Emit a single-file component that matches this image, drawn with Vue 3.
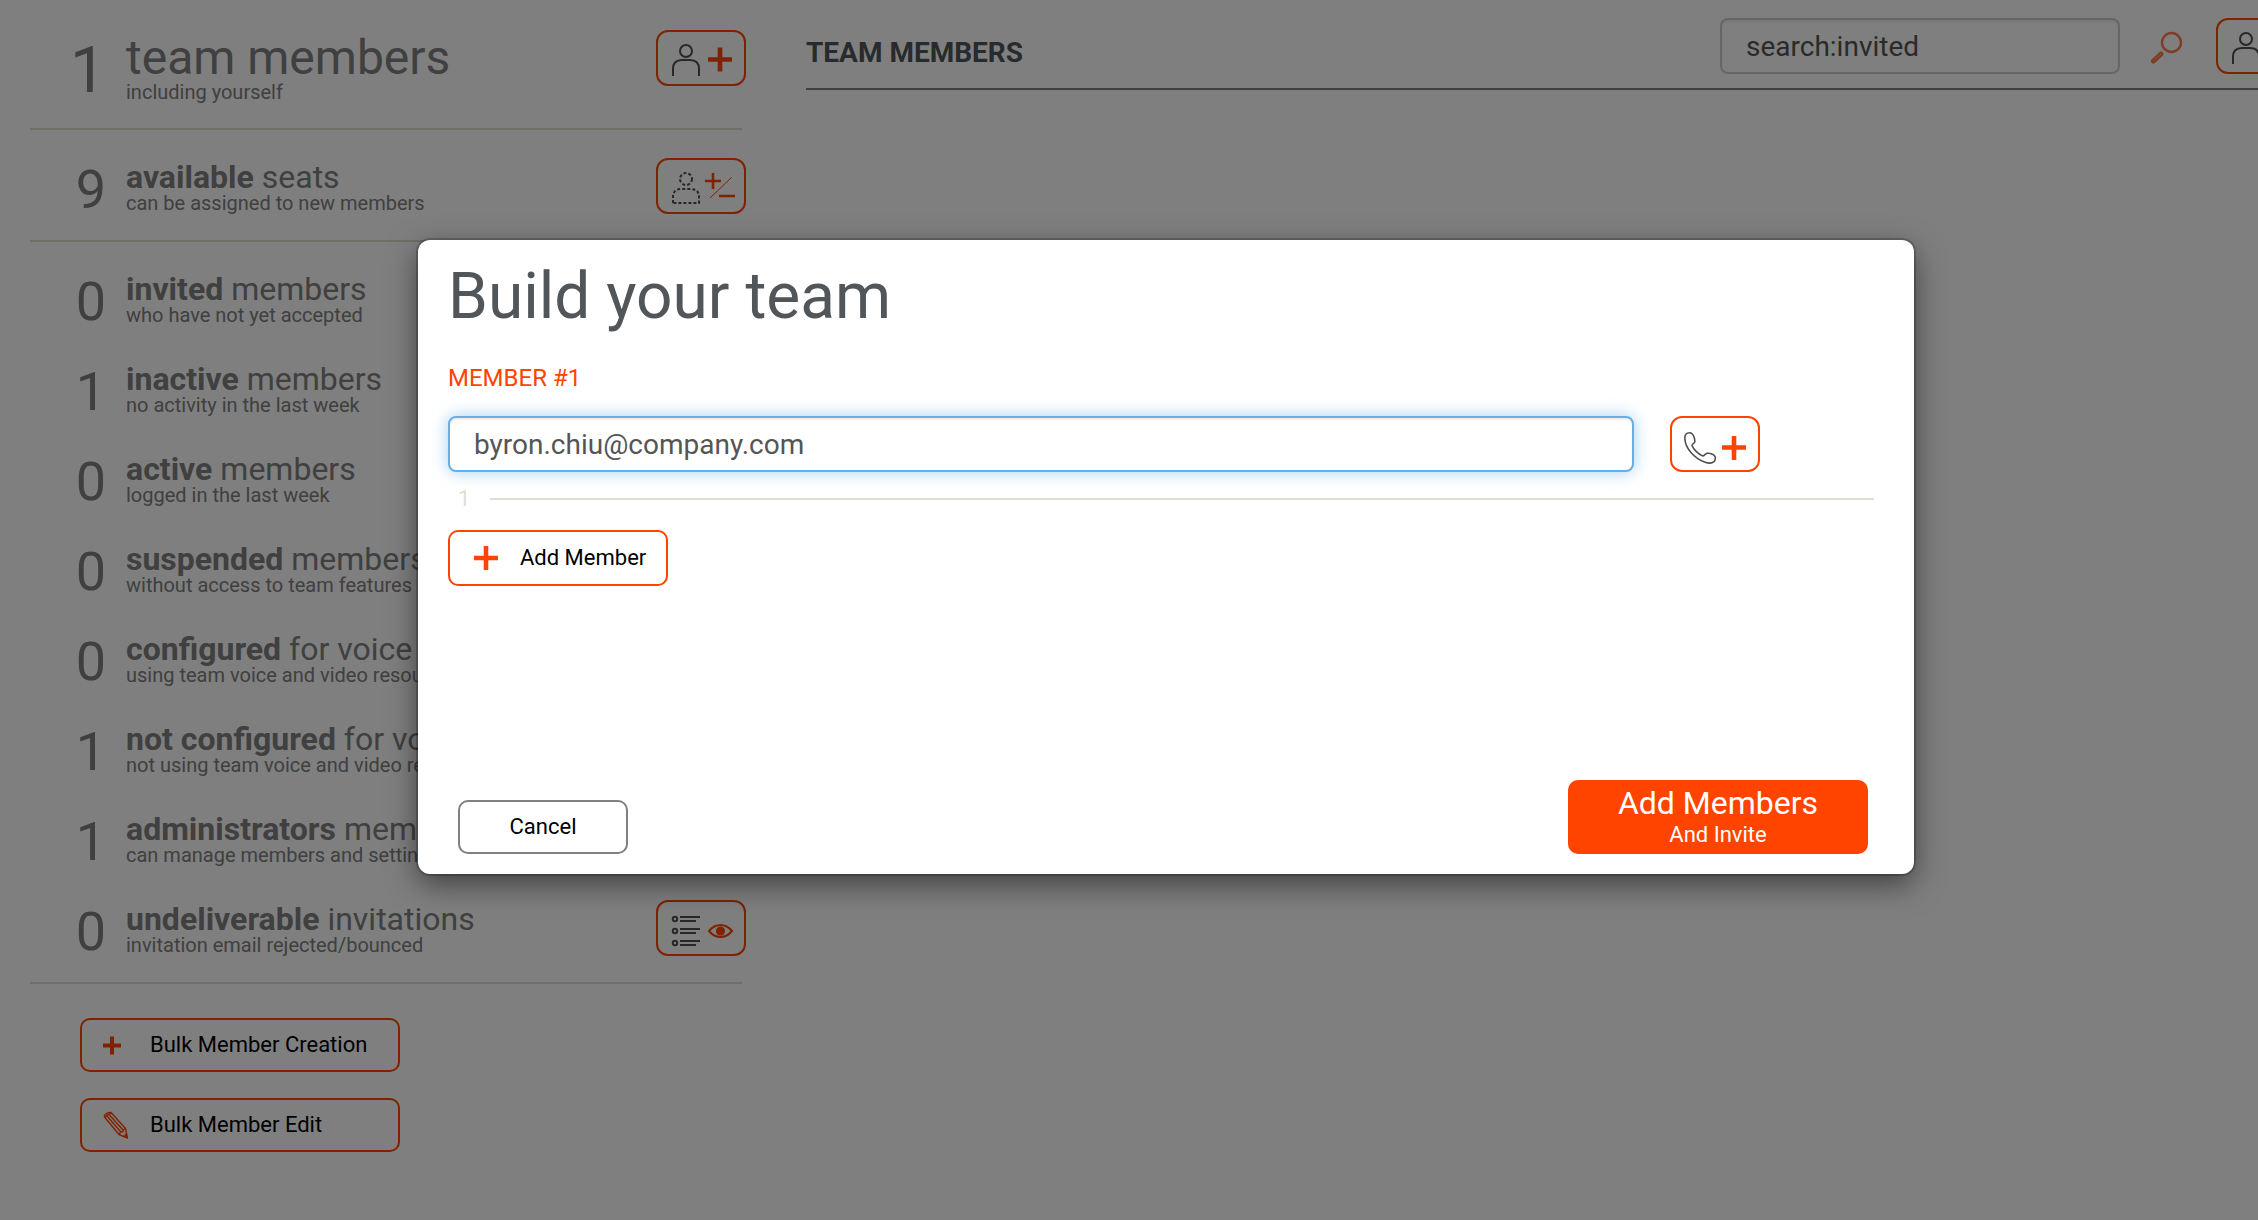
<script setup>
import { ref } from 'vue'

const search = ref('search:invited')
const email = ref('byron.chiu@company.com')

const seats = { count: 9, strong: 'available', rest: 'seats', note: 'can be assigned to new members' }

const stats = [
  { count: 0, strong: 'invited', rest: 'members', note: 'who have not yet accepted' },
  { count: 1, strong: 'inactive', rest: 'members', note: 'no activity in the last week' },
  { count: 0, strong: 'active', rest: 'members', note: 'logged in the last week' },
  { count: 0, strong: 'suspended', rest: 'members', note: 'without access to team features' },
  { count: 0, strong: 'configured', rest: 'for voice', note: 'using team voice and video resources' },
  { count: 1, strong: 'not configured', rest: 'for voice', note: 'not using team voice and video resources' },
  { count: 1, strong: 'administrators', rest: 'members', note: 'can manage members and settings' },
  { count: 0, strong: 'undeliverable', rest: 'invitations', note: 'invitation email rejected/bounced', action: true },
]
</script>

<template>
  <div class="shell">
    <div class="page">
      <aside class="sidebar">
        <section class="group">
          <div class="stat stat-lead">
            <span class="count">1</span>
            <div class="label">
              <h1>team members</h1>
              <p>including yourself</p>
            </div>
            <button class="icon-button" type="button" aria-label="Add team member">
              <svg viewBox="2 2 86 52" aria-hidden="true">
                <g class="ink">
                  <circle cx="30" cy="21" r="6" />
                  <path d="M17 46V39Q17 30 26 30H34Q43 30 43 39V46" />
                </g>
                <path class="plus" d="M52 29.5H76M64 17.500V41.500" />
              </svg>
            </button>
          </div>
        </section>

        <section class="group">
          <div class="stat">
            <span class="count">{{ seats.count }}</span>
            <div class="label">
              <h2><strong>{{ seats.strong }}</strong> {{ seats.rest }}</h2>
              <p>{{ seats.note }}</p>
            </div>
            <button class="icon-button" type="button" aria-label="Change seats">
              <svg viewBox="2 2 86 52" aria-hidden="true">
                <g class="ink dashed">
                  <circle cx="30" cy="21" r="6" />
                  <path d="M17 45V39Q17 31 26 31H34Q43 31 43 39V45Z" />
                </g>
                <path class="accent" stroke-width="2.6" d="M49 23H65M57 15V31M63 38H79" />
                <path class="accent" stroke-width="1" d="M54 40L75.500 19.500" />
              </svg>
            </button>
          </div>
        </section>

        <section class="group">
          <div v-for="s in stats" :key="s.strong" class="stat">
            <span class="count">{{ s.count }}</span>
            <div class="label">
              <h2><strong>{{ s.strong }}</strong> {{ s.rest }}</h2>
              <p>{{ s.note }}</p>
            </div>
            <button v-if="s.action" class="icon-button" type="button" aria-label="View undeliverable invitations">
              <svg viewBox="2 2 86 52" aria-hidden="true">
                <g class="ink">
                  <circle cx="19" cy="19" r="2.200" />
                  <circle cx="19" cy="31" r="2.200" />
                  <circle cx="19" cy="43" r="2.200" />
                  <path d="M24 17H44M24 21H40M24 29H44M24 33H40M24 41H44M24 45H40" />
                </g>
                <path class="accent" stroke-width="2" d="M53 31Q58 25 64.500 25T76 31Q71 37 64.500 37T53 31Z" />
                <circle class="fill" cx="64.500" cy="31" r="4.600" />
              </svg>
            </button>
          </div>
        </section>

        <div class="bulk">
          <button class="button" type="button">
            <svg viewBox="0 0 28 28" aria-hidden="true">
              <path class="accent" stroke-width="4" d="M1 14.500H19M10 5.500V23.500" />
            </svg>
            Bulk Member Creation
          </button>
          <button class="button" type="button">
            <svg viewBox="0 0 28 28" aria-hidden="true">
              <g class="accent" stroke-width="1.400" stroke-linejoin="round">
                <path d="M2.500 6Q2 4 4.500 2.500T9 1.500L23.500 17.500L25.500 27L17 23.500Z" />
                <path d="M2.800 6.500C4 4.500 6.500 2.800 9 2.200M5 5L18.700 20.800M7 3.500L21.300 19.200M17 23.500L18.700 20.800L21 20.800L21.300 19L23.500 17.500" />
              </g>
              <path class="fill" d="M25.800 27.300L24.700 22Q23 22.500 21.500 25.200Z" />
            </svg>
            Bulk Member Edit
          </button>
        </div>
      </aside>

      <main class="content">
        <header class="toolbar">
          <h3>TEAM MEMBERS</h3>
          <input v-model="search" class="field search" type="text" aria-label="Search members" />
          <button class="search-button" type="button" aria-label="Search">
            <svg viewBox="0 0 36 36" aria-hidden="true">
              <circle class="accent" stroke-width="2.400" cx="23.500" cy="14.500" r="9.500" />
              <path class="accent" stroke-width="5" stroke-linecap="round" d="M13 26L5.500 33" />
              <path d="M13 26L6 32.500" stroke="#fff" stroke-width="1" stroke-dasharray="2 1" opacity=".5" />
            </svg>
          </button>
          <button class="icon-button" type="button" aria-label="Add member">
            <svg viewBox="2 2 86 52" aria-hidden="true">
              <g class="ink">
                <circle cx="30" cy="21" r="6" />
                <path d="M17 46V39Q17 30 26 30H34Q43 30 43 39V46" />
              </g>
              <path class="plus" d="M52 29.500H76M64 17.500V41.500" />
            </svg>
          </button>
        </header>
      </main>

      <div class="backdrop">
        <form class="dialog" role="dialog" aria-labelledby="dialog-title" @submit.prevent>
          <h2 id="dialog-title" class="dialog-title">Build your team</h2>
          <label class="member-label" for="member-email">MEMBER #1</label>
          <div class="member-row">
            <input id="member-email" v-model="email" class="field active" type="text" />
            <button class="icon-button" type="button" aria-label="Add phone number">
              <svg viewBox="2 2 86 52" aria-hidden="true">
                <path
                  class="ink phone"
                  d="M14.800 22C14.800 19 16.500 16.800 19.500 16.800C22 16.800 23 18.200 24 21C24.800 23.500 25.300 25.500 24.500 26.500C23.600 27.500 22 28 22 29.500C23.500 33.500 28.500 38.500 33 40C34.500 40 34.500 37.800 37 37.300C39 37 42.500 38 44 39.200C46 41 45.500 44 44 45.600C42 47.500 38 47.300 35 46.300C25 43 15 32.500 14.800 22Z"
                />
                <path class="plus" d="M52 31.500H76M64 20V44" />
              </svg>
            </button>
          </div>
          <div class="counter"><span>1</span><hr /></div>
          <button class="button add" type="button">
            <svg viewBox="0 0 24 24" aria-hidden="true">
              <path class="plus" d="M0 12H24M12 0V24" />
            </svg>
            Add Member
          </button>
          <footer class="actions">
            <button class="button cancel" type="button">Cancel</button>
            <button class="submit" type="submit">
              <span>Add Members</span>
              <small>And Invite</small>
            </button>
          </footer>
        </form>
      </div>
    </div>
  </div>
</template>

<style>
body {
  margin: 0;
  background: #fff;
}
</style>

<style scoped>
.shell {
  overflow: hidden;
  font-family: Roboto, "Liberation Sans", sans-serif;
  color: #808080;
}
/* The workspace runs a little wider than the window, as the toolbar does. */
.page {
  position: relative;
  display: flex;
  width: calc(100% + 74px);
  min-height: 100vh;
}
h1, h2, h3, p {
  margin: 0;
  font-weight: 400;
}
button, input {
  box-sizing: border-box;
  font-family: inherit;
}
button {
  cursor: pointer;
}

.sidebar {
  flex: none;
  width: 716px;
  padding: 2px 0 0 30px;
}
.group {
  width: 712px;
  padding-top: 20px;
  border-bottom: 2px solid #dde0cc;
}
.stat {
  display: flex;
  align-items: flex-start;
  gap: 20px;
  height: 90px;
  white-space: nowrap;
}
.count {
  flex: none;
  width: 76px;
  margin-top: 13px;
  font-size: 54px;
  line-height: 54px;
  text-align: right;
}
.label {
  flex: 1;
  padding-top: 11px;
}
.label h2 {
  font-size: 32px;
  line-height: 32px;
}
.label p {
  font-size: 20px;
  line-height: 20px;
}
.label strong {
  font-weight: 700;
}
.stat-lead {
  height: 106px;
}
.stat-lead .count {
  margin-top: 17px;
  font-size: 64px;
  line-height: 64px;
}
.stat-lead .label {
  padding-top: 12px;
}
.stat-lead h1 {
  font-size: 48px;
  line-height: 48px;
}
.stat .icon-button {
  margin: 8px -4px 0 0;
}

.icon-button {
  flex: none;
  width: 90px;
  height: 56px;
  padding: 0;
  border: 2px solid #ff4400;
  border-radius: 12px;
  background: transparent;
}
.icon-button svg {
  display: block;
  width: 86px;
  height: 52px;
}
svg {
  fill: none;
}
.ink {
  stroke: #505050;
  stroke-width: 2;
}
.dashed {
  stroke-dasharray: 3 2;
}
.phone {
  stroke-width: 1.6px;
}
.accent {
  stroke: #ff4400;
}
.fill {
  fill: #ff4400;
}
.plus {
  stroke: #ff4400;
  stroke-width: 4.6px;
}

.bulk {
  display: flex;
  flex-direction: column;
  gap: 26px;
  width: 320px;
  padding: 34px 0 40px 50px;
}
.button {
  display: flex;
  align-items: center;
  gap: 20px;
  height: 54px;
  padding: 0 20px;
  border: 2px solid #ff4400;
  border-radius: 10px;
  background: transparent;
  color: #000;
  font-size: 22px;
  line-height: 28px;
  white-space: nowrap;
}
.button svg {
  width: 28px;
  height: 28px;
}

.content {
  flex: 1;
  padding-left: 60px;
}
.toolbar {
  display: flex;
  align-items: center;
  height: 56px;
  padding: 18px 26px 14px 0;
  border-bottom: 2px solid #808080;
}
.toolbar h3 {
  flex: 1;
  padding-top: 14px;
  color: #50565a;
  font-size: 28px;
  font-weight: 700;
  line-height: 36px;
}
.field {
  height: 56px;
  padding: 0 24px;
  border: 2px solid #ccc;
  border-radius: 8px;
  background: #fff;
  box-shadow: inset 0 2px 2px rgba(0, 0, 0, 0.07);
  color: #555;
  font-size: 28px;
  outline: none;
}
.search {
  width: 400px;
}
.search-button {
  width: 36px;
  height: 36px;
  margin: 0 32px 0 28px;
  padding: 0;
  border: 0;
  background: none;
  opacity: 0.7;
}
.search-button svg {
  display: block;
  width: 36px;
  height: 36px;
}

.backdrop {
  position: absolute;
  inset: 0;
  display: flex;
  justify-content: center;
  align-items: flex-start;
  padding-top: 240px;
  background: rgba(0, 0, 0, 0.5);
}
.dialog {
  box-sizing: border-box;
  display: flex;
  flex-direction: column;
  align-items: flex-start;
  width: calc(100% - 120px);
  max-width: 1496px;
  min-height: 634px;
  padding: 21px 40px 20px 30px;
  border-radius: 12px;
  background: #fff;
  box-shadow: 0 0 0 2px rgba(0, 0, 0, 0.2), 0 10px 30px rgba(0, 0, 0, 0.5);
}
.dialog-title {
  color: #50565a;
  font-size: 64px;
  line-height: 72px;
}
.member-label {
  margin: 31px 0 24px;
  color: #ff4400;
  font-size: 24px;
  line-height: 28px;
}
.member-row {
  display: flex;
  align-self: stretch;
  gap: 36px;
  padding-right: 114px;
}
.member-row .field {
  flex: 1;
  min-width: 0;
}
.field.active {
  border-color: #66afe9;
  box-shadow: inset 0 2px 2px rgba(0, 0, 0, 0.07), 0 0 16px rgba(102, 175, 233, 0.6);
}
.counter {
  display: flex;
  align-self: stretch;
  align-items: center;
  margin: 13px 0 17px;
  color: #dde0cc;
  font-size: 22px;
  line-height: 28px;
}
.counter span {
  width: 32px;
  padding-left: 10px;
}
.counter hr {
  flex: 1;
  margin: 0;
  border: 0;
  border-top: 2px solid #dde0cc;
}
.add {
  gap: 22px;
  height: 56px;
  padding: 0 20px 0 24px;
}
.add svg {
  width: 24px;
  height: 24px;
}
.actions {
  display: flex;
  align-self: stretch;
  align-items: flex-end;
  justify-content: space-between;
  margin-top: auto;
  padding: 20px 6px 0 10px;
}
.cancel {
  justify-content: center;
  width: 170px;
  border-color: #808080;
}
.submit {
  display: flex;
  flex-direction: column;
  align-items: center;
  justify-content: center;
  width: 300px;
  height: 74px;
  padding: 0;
  border: 0;
  border-radius: 10px;
  background: #ff4400;
  color: #fff;
}
.submit span {
  font-size: 32px;
  line-height: 36px;
}
.submit small {
  font-size: 22px;
  line-height: 28px;
}
</style>
